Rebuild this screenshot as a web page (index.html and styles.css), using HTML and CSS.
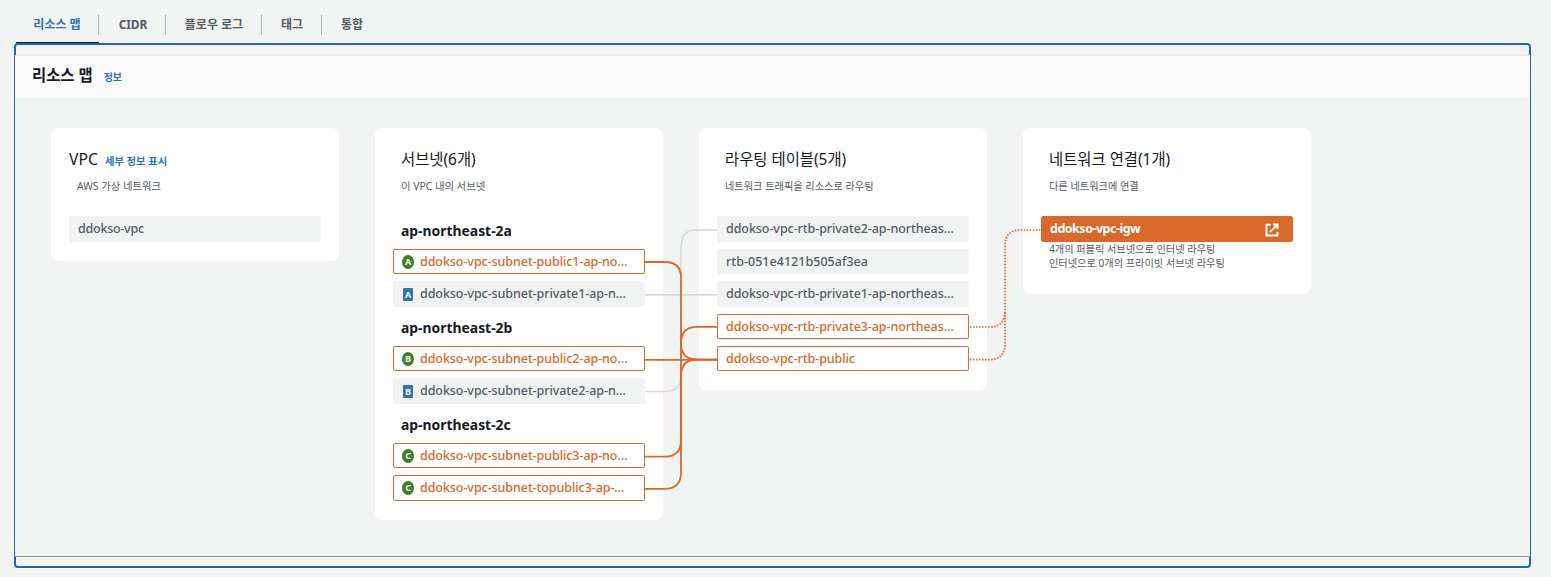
FILE: index.html
```
<!DOCTYPE html>
<html lang="ko">
<head>
<meta charset="utf-8">
<title>리소스 맵</title>
<link rel="stylesheet" href="styles.css">
</head>
<body>
<nav class="tabs">
  <a class="tab active">리소스 맵</a>
  <a class="tab cidr">CIDR</a>
  <a class="tab flow">플로우 로그</a>
  <a class="tab tags">태그</a>
  <a class="tab share">통합</a>
</nav>
<main class="frame">
  <section class="panel">
    <header class="panel-head"><h1>리소스 맵</h1><a class="info">정보</a></header>
    <div class="map">
      <article class="card vpc">
        <h2>VPC <a class="details">세부 정보 표시</a></h2>
        <p class="sub">AWS 가상 네트워크</p>
        <div class="rows"><div class="item"><span class="name">ddokso-vpc</span></div></div>
      </article>
      <article class="card subnets">
        <h2>서브넷(6개)</h2>
        <p class="sub">이 VPC 내의 서브넷</p>
        <div class="rows">
          <h3>ap-northeast-2a</h3>
          <div class="item on"><i class="badge public">A</i><span class="name">ddokso-vpc-subnet-public1-ap-no…</span></div>
          <div class="item"><i class="badge">A</i><span class="name">ddokso-vpc-subnet-private1-ap-n…</span></div>
          <h3>ap-northeast-2b</h3>
          <div class="item on"><i class="badge public">B</i><span class="name">ddokso-vpc-subnet-public2-ap-no…</span></div>
          <div class="item"><i class="badge">B</i><span class="name">ddokso-vpc-subnet-private2-ap-n…</span></div>
          <h3>ap-northeast-2c</h3>
          <div class="item on"><i class="badge public">C</i><span class="name">ddokso-vpc-subnet-public3-ap-no…</span></div>
          <div class="item on"><i class="badge public">C</i><span class="name">ddokso-vpc-subnet-topublic3-ap-…</span></div>
        </div>
      </article>
      <article class="card routes">
        <h2>라우팅 테이블(5개)</h2>
        <p class="sub">네트워크 트래픽을 리소스로 라우팅</p>
        <div class="rows">
          <div class="item"><span class="name">ddokso-vpc-rtb-private2-ap-northeas…</span></div>
          <div class="item"><span class="name id">rtb-051e4121b505af3ea</span></div>
          <div class="item"><span class="name">ddokso-vpc-rtb-private1-ap-northeas…</span></div>
          <div class="item on"><span class="name">ddokso-vpc-rtb-private3-ap-northeas…</span></div>
          <div class="item on"><span class="name">ddokso-vpc-rtb-public</span></div>
        </div>
      </article>
      <article class="card network">
        <h2>네트워크 연결(1개)</h2>
        <p class="sub">다른 네트워크에 연결</p>
        <div class="rows">
          <div class="item selected"><span class="name">ddokso-vpc-igw</span>
            <svg class="external" viewBox="0 0 14 14"><path d="M5.5 1.8H1.5V12.5H12.5V8.8M8 1.5H12.5V6M12.3 1.7L5 9"/></svg>
          </div>
        </div>
        <p class="note">4개의 퍼블릭 서브넷으로 인터넷 라우팅<br>인터넷으로 0개의 프라이빗 서브넷 라우팅</p>
      </article>
      <!-- Connections; the viewBox origin is the map's top left corner -->
      <svg class="wires" viewBox="15 99 1515 457">
        <g class="idle">
          <path d="M645 391.5H665Q681 391.5 681 375V247Q681 229.8 697 229.8H717"/>
          <path d="M645 294.8H717"/>
        </g>
        <g class="live">
          <path d="M645 262H665Q681 262 681 278V343Q681 359.5 697 359.5H717"/>
          <path d="M645 359.8H717"/>
          <path d="M645 456.7H665Q681 456.7 681 440V376Q681 359.5 697 359.5"/>
          <path d="M645 488.8H665Q681 488.8 681 472V343Q681 326.8 697 326.8H717"/>
        </g>
        <g class="dotted">
          <path d="M970 327H989Q1005 327 1005 311"/>
          <path d="M970 359.7H989Q1005 359.7 1005 343V246Q1005 230 1021 230H1041"/>
        </g>
      </svg>
    </div>
  </section>
</main>
</body>
</html>
```
FILE: styles.css
```
* { box-sizing: border-box; }
body {
  margin: 0;
  height: 577px;
  overflow: hidden;
  background: #f2f4f3;
  color: #16191f;
  font-family: "Noto Sans", "Noto Sans CJK KR", sans-serif;
}
h1, h2, h3, p { margin: 0; white-space: nowrap; }
.tabs { display: flex; height: 43px; padding-left: 16px; }
.tab {
  position: relative;
  width: 60px;
  padding-top: 15px;
  line-height: 19px;
  text-align: center;
  font-size: 12px;
  font-weight: 700;
  color: #545b64;
  white-space: nowrap;
}
.tab:not(:last-child)::after {
  content: "";
  position: absolute;
  right: 0;
  top: 15px;
  width: 1px;
  height: 20px;
  background: #aab7b8;
}
.active { width: 83px; padding-right: 1px; color: #2e73b8; border-bottom: 1px solid #16191f; }
.cidr { width: 67px; padding-left: 1px; letter-spacing: -0.1px; }
.flow { width: 96px; }
.frame {
  width: 1517px;
  height: 525px;
  margin-left: 14px;
  padding-top: 10px;
  border: 2px solid #2360c5;
  border-radius: 4px;
  box-shadow: 0 0 0 1px #fff;
}
.panel {
  height: 502px;
  margin: 0 -1px;
  background: #f2f4f3;
  border-bottom: 1px solid #879596;
}
.panel-head {
  display: flex;
  align-items: center;
  gap: 11px;
  height: 44px;
  padding: 0 0 4px 17px;
  background: #fafafa;
  border-top: 1px solid #eaeded;
  border-bottom: 1px solid #eaeded;
}
h1 { padding-top: 2px; font-size: 15.4px; line-height: 24px; font-weight: 700; }
.info { font-size: 10px; font-weight: 700; color: #2e73b8; padding-top: 3px; }
.map {
  position: relative;
  display: flex;
  align-items: flex-start;
  gap: 36px;
  height: 457px;
  padding: 29px 0 0 36px;
}
.card { width: 288px; padding: 18px; background: #fff; border-radius: 8px; }
h2 { height: 28px; padding-left: 8px; font-size: 15.4px; line-height: 28px; font-weight: 400; }
.vpc h2 { padding-left: 0; font-size: 15.7px; line-height: 26px; }
.details { margin-left: 3px; font-size: 10.3px; font-weight: 700; color: #2e73b8; }
.sub { height: 42px; padding-left: 8px; font-size: 10.2px; line-height: 24px; color: #545b64; }
.vpc .sub, .subnets .sub { font-size: 10.35px; }
.rows { display: grid; row-gap: 7px; grid-auto-rows: 26px; }
.subnets .rows { grid-template-rows: 26px 25px 26px 25px 25px 26px 25px 25px 26px; }
.routes .rows { grid-template-rows: 26px 25px 26px 25px 25px; }
.subnets { height: 392px; }
.routes { height: 263px; }
.network { height: 166px; }
.vpc { height: 133px; }
h3 { padding-left: 8px; font-size: 13.9px; line-height: 29px; font-weight: 700; }
.item + h3 { line-height: 27px; }
.item {
  display: flex;
  align-items: center;
  padding: 0 8px;
  border: 1px solid #f1f3f3;
  border-radius: 2px;
  background: #f1f3f3;
  color: #545b64;
  font-size: 12.5px;
  font-weight: 500;
  line-height: 18px;
  letter-spacing: -0.07px;
  white-space: nowrap;
}
.id { letter-spacing: 0.03px; }
.vpc .item { letter-spacing: -0.25px; }
.on { background: #fff; border-color: #d9682b; color: #d9682b; }
.selected { background: #d9682b; border-color: #d9682b; color: #fff; font-weight: 700; letter-spacing: -0.5px; }
.badge {
  width: 10px;
  height: 13px;
  margin: 0 7px 0 1px;
  border-radius: 1px;
  background: #2e73b8;
  color: #fff;
  font: 700 9px/13px "Noto Sans", sans-serif;
  text-align: center;
}
.public { width: 12px; height: 14px; margin: 0 6px 0 0; border-radius: 50%; background: #3b8024; line-height: 14px; }
.external { width: 14px; height: 14px; margin: 2px 5px 0 auto; fill: none; stroke: #fff; stroke-width: 1.9; }
.note { padding-left: 8px; font-size: 10.2px; line-height: 14px; color: #545b64; }
.wires { position: absolute; left: 0; top: 0; width: 1515px; height: 457px; fill: none; }
.idle { stroke: #d5dbdb; stroke-width: 1.7; }
.live { stroke: #d9682b; stroke-width: 1.8; }
.dotted { stroke: #d9682b; stroke-width: 1.7; stroke-dasharray: 1.5 1.5; }
```
